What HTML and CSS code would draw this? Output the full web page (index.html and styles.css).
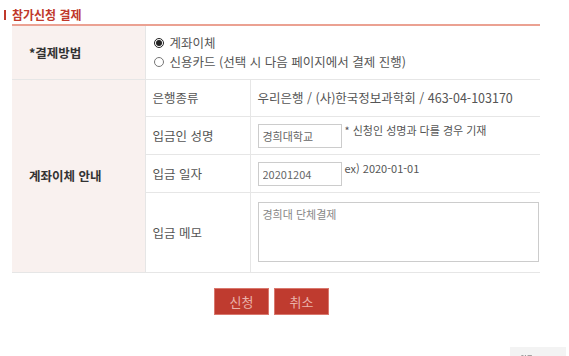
FILE: index.html
```html
<!DOCTYPE html>
<html lang="ko">
<head>
    <meta charset="UTF-8">
    <title>참가신청 결제</title>
    <link rel="stylesheet" href="styles.css">
</head>
<body>
    <div class="wrap">
        <h2 class="sub-title"><span class="bar"></span>참가신청 결제</h2>

        <table class="pay-table">
            <colgroup>
                <col class="col-head">
                <col class="col-label">
                <col>
            </colgroup>
            <tr class="row-method">
                <th>*결제방법</th>
                <td colspan="2" class="radios">
                    <label><input type="radio" name="pay" checked> 계좌이체</label>
                    <label><input type="radio" name="pay"> 신용카드 (선택 시 다음 페이지에서 결제 진행)</label>
                </td>
            </tr>
            <tr class="row-bank">
                <th rowspan="4">계좌이체 안내</th>
                <td class="label">은행종류</td>
                <td>우리은행 / (사)한국정보과학회 / 463-04-103170</td>
            </tr>
            <tr class="row-name">
                <td class="label">입금인 성명</td>
                <td><input type="text" class="field" value="경희대학교"><span class="note">* 신청인 성명과 다를 경우 기재</span></td>
            </tr>
            <tr class="row-date">
                <td class="label">입금 일자</td>
                <td><input type="text" class="field" value="20201204"><span class="note">ex) 2020-01-01</span></td>
            </tr>
            <tr class="row-memo">
                <td class="label">입금 메모</td>
                <td><textarea class="memo">경희대 단체결제</textarea></td>
            </tr>
        </table>

        <div class="btns">
            <button type="button" class="btn">신청</button>
            <button type="button" class="btn">취소</button>
        </div>
    </div>

    <div class="top-btn">위로</div>
</body>
</html>
```

FILE: styles.css
```css
body {
    margin: 0;
    padding: 0;
    background-color: #fff;
    font-family: "Noto Sans CJK KR", "Noto Sans", sans-serif;
    color: #444;
    font-size: 12px;
}
.wrap {
    width: 528px;
    padding: 5px 0 0 12px;
}
.sub-title {
    position: relative;
    margin: 0;
    font-size: 12px;
    line-height: 19px;
    font-weight: bold;
    color: #c0392b;
}
.sub-title .bar {
    position: absolute;
    left: -8px;
    top: 5px;
    width: 2px;
    height: 10px;
    background-color: #c0392b;
}
.pay-table {
    width: 100%;
    border-collapse: collapse;
    border-top: 2px solid #eba192;
}
.col-head {
    width: 133px;
}
.col-label {
    width: 105px;
}
.pay-table th {
    background-color: #f9f1ef;
    font-weight: bold;
    font-size: 12.5px;
    color: #333;
    text-align: left;
    padding: 0 0 0 17px;
    border-bottom: 1px solid #e6e6e6;
    border-right: 1px solid #e6e6e6;
}
.pay-table td {
    padding: 0 0 0 7px;
    border-bottom: 1px solid #e6e6e6;
    border-right: 1px solid #e6e6e6;
    font-size: 12.5px;
    color: #555;
}
.pay-table td:last-child {
    border-right: none;
}
.row-method {
    height: 54px;
}
.row-bank {
    height: 37px;
}
.row-name,
.row-date {
    height: 38px;
}
.row-memo {
    height: 80px;
}
.radios label {
    display: flex;
    align-items: center;
    gap: 4px;
    line-height: 19px;
}
.radios input {
    margin: 0 2px 0 1px;
    width: 10px;
    height: 10px;
    accent-color: #222;
}
.field {
    width: 84px;
    height: 24px;
    box-sizing: border-box;
    border: 1px solid #ccc;
    padding: 0 4px;
    font-family: "Noto Sans CJK KR", sans-serif;
    font-size: 11px;
    color: #666;
    vertical-align: middle;
}
.note {
    margin-left: 3px;
    font-size: 11px;
    color: #555;
    vertical-align: 4px;
}
.memo {
    display: block;
    width: 281px;
    height: 60px;
    box-sizing: border-box;
    border: 1px solid #ccc;
    padding: 3px 4px;
    font-family: "Noto Sans CJK KR", sans-serif;
    font-size: 11px;
    color: #888;
    resize: none;
}
.btns {
    display: flex;
    justify-content: center;
    gap: 5px;
    margin-top: 15px;
    padding-right: 9px;
}
.btn {
    width: 55px;
    height: 27px;
    background-color: #bf3b2f;
    border: 1px solid #d9776d;
    color: #eab3ab;
    font-family: "Noto Sans CJK KR", sans-serif;
    font-size: 13px;
    padding: 0;
}
.top-btn {
    position: fixed;
    left: 510px;
    top: 347px;
    width: 56px;
    height: 14px;
    background-color: #f3f3f3;
    font-size: 7px;
    color: #555;
    padding-left: 10px;
    box-sizing: border-box;
    line-height: 22px;
}
```
